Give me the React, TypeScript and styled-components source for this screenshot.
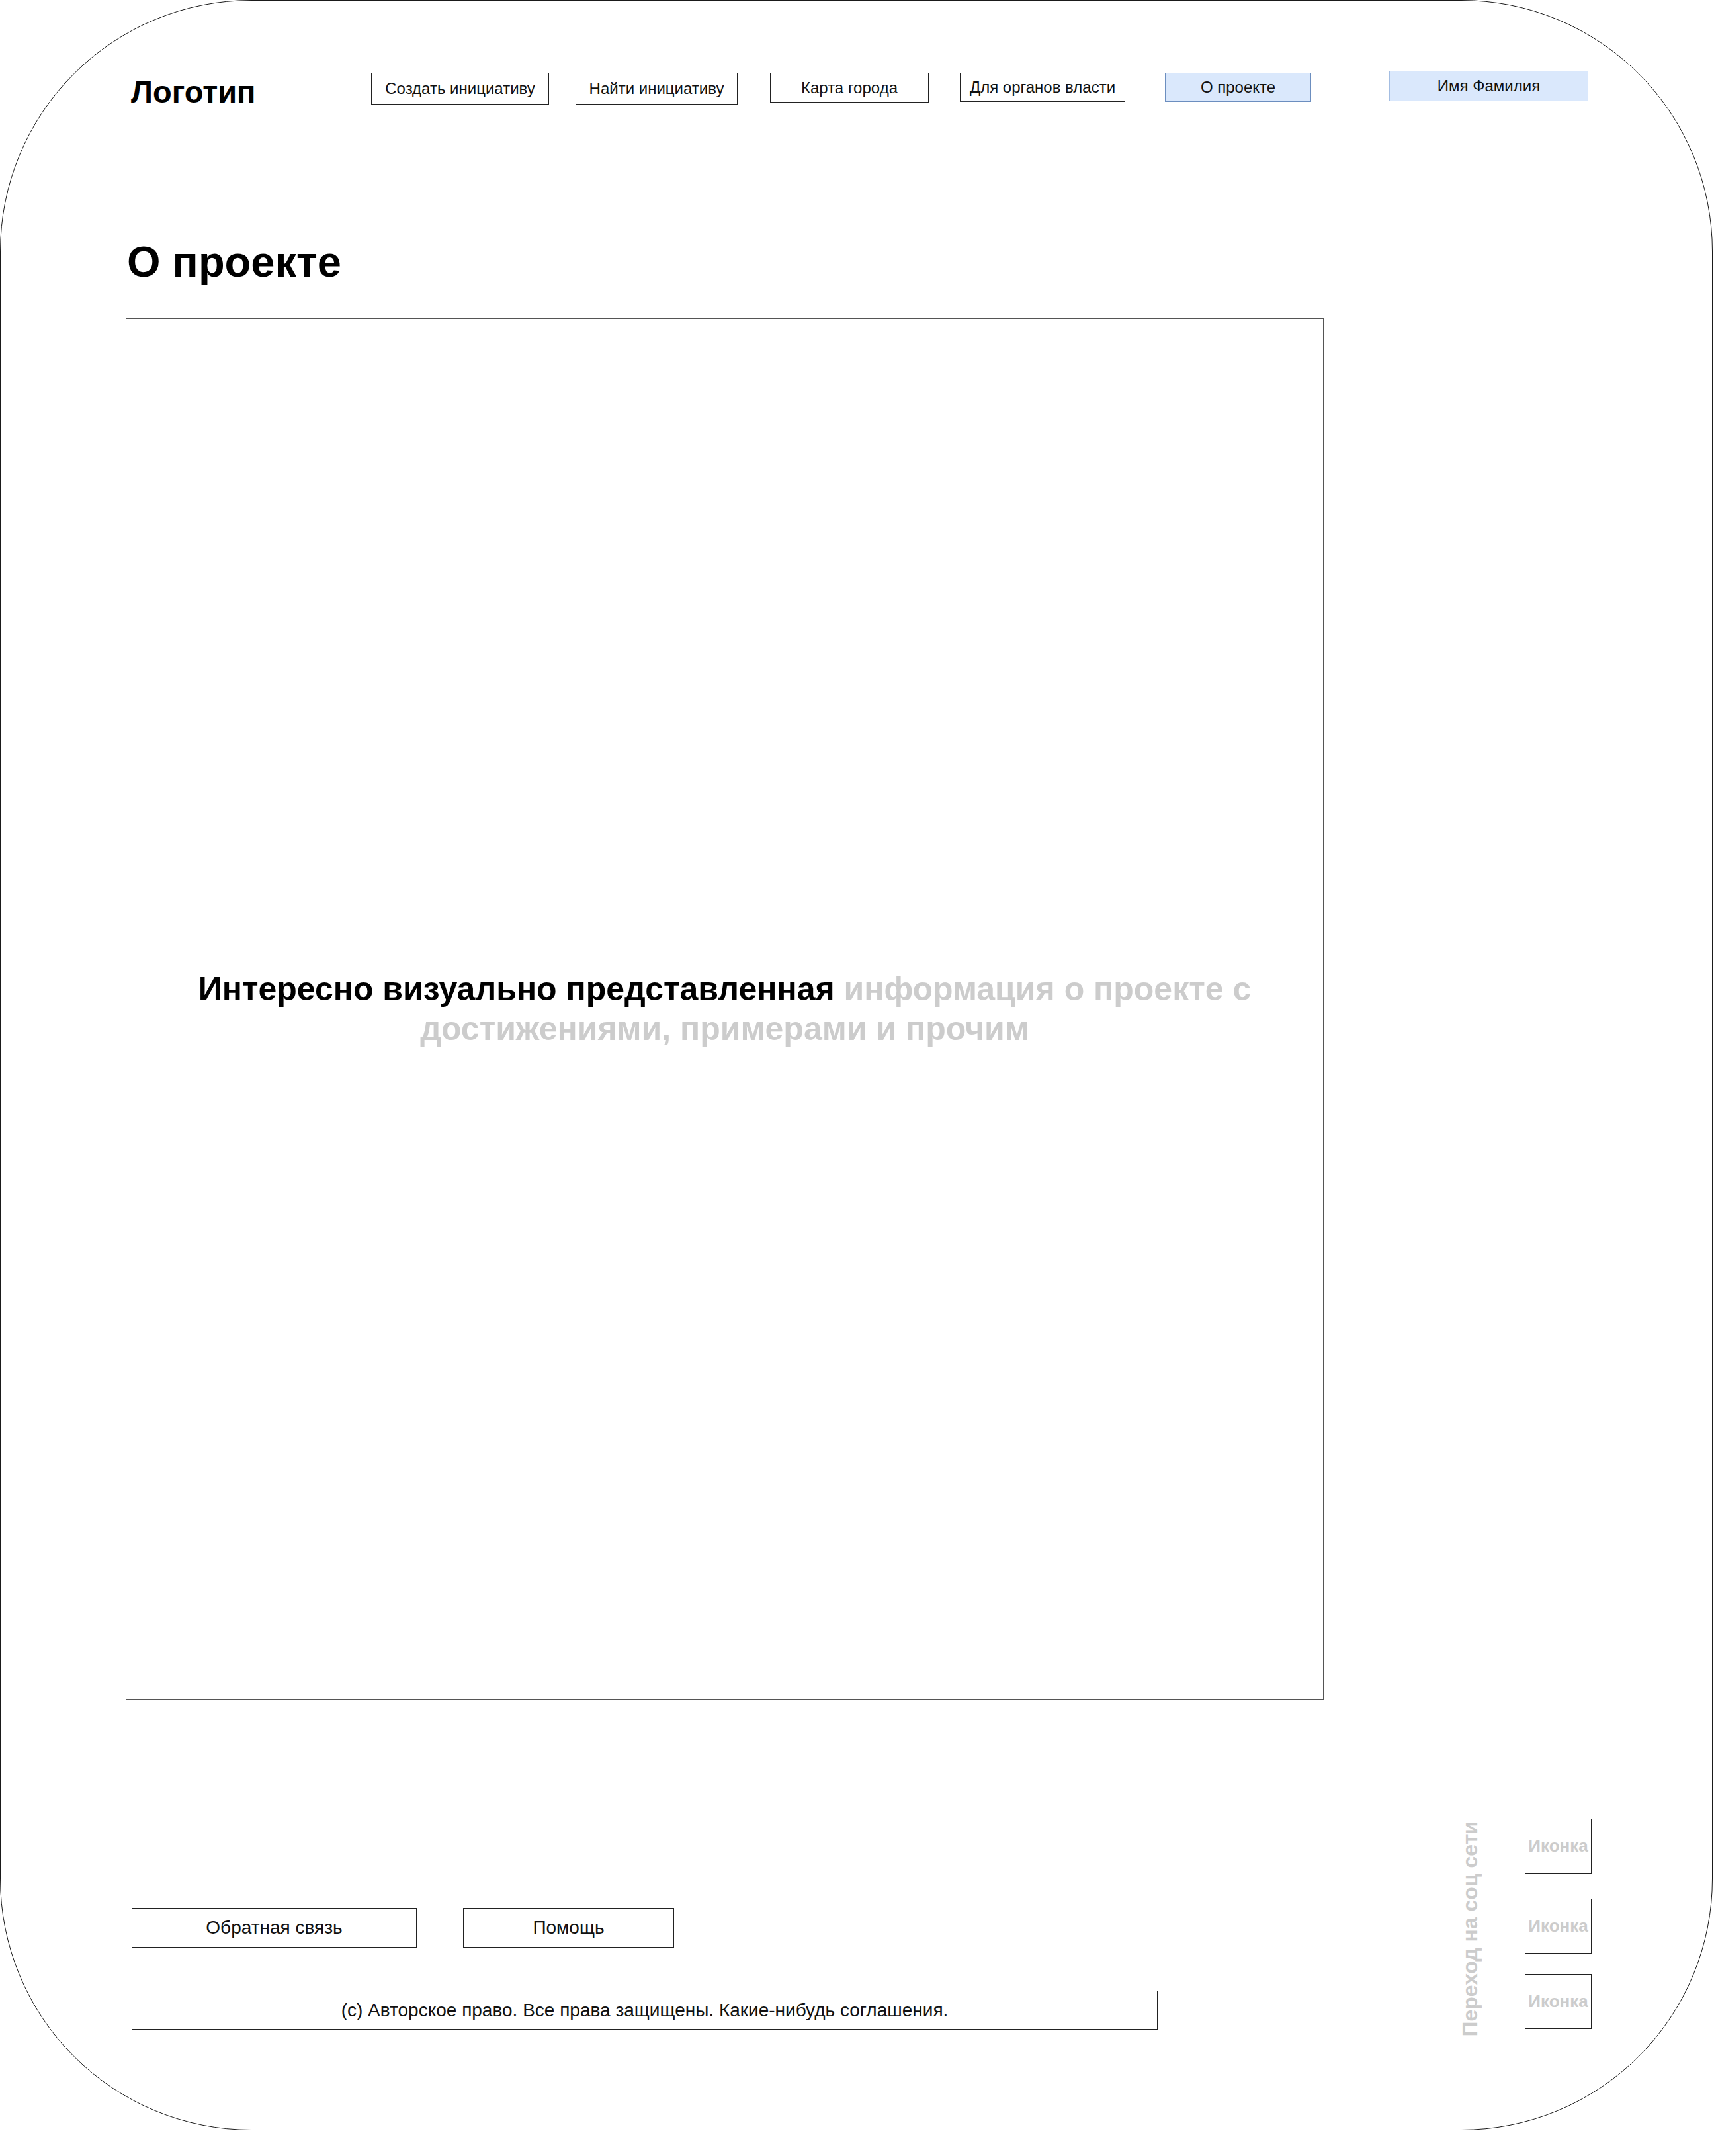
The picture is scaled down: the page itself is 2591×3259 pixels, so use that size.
import React from "react";
import styled, { createGlobalStyle } from "styled-components";

const GlobalStyle = createGlobalStyle`
  html, body {
    margin: 0;
    padding: 0;
    background: #ffffff;
  }
  body {
    font-family: "Liberation Sans", Arial, Helvetica, sans-serif;
    color: #000;
  }
`;

const Frame = styled.div`
  box-sizing: border-box;
  width: 2589px;
  height: 3220px;
  border: 1px solid #1a1a1a;
  border-radius: 380px;
  display: flex;
  flex-direction: column;
`;

const Header = styled.header`
  box-sizing: border-box;
  height: 161px;
  display: flex;
  align-items: flex-start;
  padding: 109px 0 0 197px;
`;

const Logo = styled.div`
  width: 363px;
  margin-top: 5px;
  font-size: 47px;
  line-height: 1;
  font-weight: 700;
`;

const NavButton = styled.div<{ $w: number; $h: number; $ml: number; $mt?: number; $active?: boolean; $soft?: boolean }>`
  box-sizing: border-box;
  flex: none;
  width: ${(p) => p.$w}px;
  height: ${(p) => p.$h}px;
  margin-left: ${(p) => p.$ml}px;
  margin-top: ${(p) => p.$mt ?? 0}px;
  display: flex;
  align-items: center;
  justify-content: center;
  font-size: 24px;
  color: #111;
  white-space: nowrap;
  background: ${(p) => (p.$active ? "#dae8fc" : "#ffffff")};
  border: 1px solid ${(p) => (p.$soft ? "#a3bde2" : p.$active ? "#6c8ebf" : "#222")};
`;

const Title = styled.h1`
  margin: 201px 0 0 191px;
  font-size: 65px;
  line-height: 1;
  font-weight: 700;
`;

const ContentBox = styled.section`
  box-sizing: border-box;
  margin: 53px 0 0 189px;
  width: 1811px;
  height: 2088px;
  border: 1px solid #555;
  display: flex;
  align-items: center;
  justify-content: center;
`;

const Lead = styled.p`
  margin: 0;
  text-align: center;
  font-size: 50px;
  line-height: 60px;
  font-weight: 700;
  color: #000;
`;

const Muted = styled.span`
  color: #cccccc;
`;

const Footer = styled.footer`
  margin-top: 180px;
  display: flex;
  justify-content: space-between;
  align-items: flex-start;
  padding: 0 182px 0 198px;
`;

const LeftCol = styled.div`
  margin-top: 135px;
  width: 1551px;
  display: flex;
  flex-direction: column;
`;

const ButtonRow = styled.div`
  display: flex;
  gap: 70px;
`;

const FooterButton = styled.div<{ $w: number }>`
  box-sizing: border-box;
  width: ${(p) => p.$w}px;
  height: 60px;
  border: 1px solid #222;
  display: flex;
  align-items: center;
  justify-content: center;
  font-size: 28px;
  color: #111;
`;

const Copyright = styled.div`
  box-sizing: border-box;
  margin-top: 65px;
  width: 100%;
  height: 59px;
  border: 1px solid #222;
  display: flex;
  align-items: center;
  justify-content: center;
  font-size: 28px;
  color: #111;
`;

const Social = styled.div`
  display: flex;
  align-items: flex-start;
`;

const SocialLabel = styled.div`
  writing-mode: vertical-rl;
  transform: rotate(180deg);
  font-size: 32px;
  line-height: 1;
  font-weight: 700;
  color: #cccccc;
  margin: 4px 67px 0 0;
  white-space: nowrap;
`;

const IconStack = styled.div`
  display: flex;
  flex-direction: column;
`;

const IconBox = styled.div<{ $mt?: number }>`
  box-sizing: border-box;
  width: 101px;
  height: 83px;
  margin-top: ${(p) => p.$mt ?? 0}px;
  border: 1px solid #222;
  display: flex;
  align-items: center;
  justify-content: center;
  font-size: 26px;
  font-weight: 700;
  color: #cccccc;
`;

const nav = [
  { t: "Создать инициативу", w: 269, h: 48, ml: 0 },
  { t: "Найти инициативу", w: 245, h: 48, ml: 40 },
  { t: "Карта города", w: 240, h: 45, ml: 49 },
  { t: "Для органов власти", w: 250, h: 44, ml: 47 },
];

export default function App() {
  return (
    <>
      <GlobalStyle />
      <Frame>
        <Header>
          <Logo>Логотип</Logo>
          {nav.map((n) => (
            <NavButton key={n.t} $w={n.w} $h={n.h} $ml={n.ml}>
              {n.t}
            </NavButton>
          ))}
          <NavButton $w={221} $h={44} $ml={60} $active>
            О проекте
          </NavButton>
          <NavButton $w={301} $h={46} $ml={118} $mt={-3} $active $soft>
            Имя Фамилия
          </NavButton>
        </Header>

        <Title>О проекте</Title>

        <ContentBox>
          <Lead>
            Интересно визуально представленная <Muted>информация о проекте с</Muted>
            <br />
            <Muted>достижениями, примерами и прочим</Muted>
          </Lead>
        </ContentBox>

        <Footer>
          <LeftCol>
            <ButtonRow>
              <FooterButton $w={431}>Обратная связь</FooterButton>
              <FooterButton $w={319}>Помощь</FooterButton>
            </ButtonRow>
            <Copyright>(с) Авторское право. Все права защищены. Какие-нибудь соглашения.</Copyright>
          </LeftCol>
          <Social>
            <SocialLabel>Переход на соц сети</SocialLabel>
            <IconStack>
              <IconBox>Иконка</IconBox>
              <IconBox $mt={38}>Иконка</IconBox>
              <IconBox $mt={31}>Иконка</IconBox>
            </IconStack>
          </Social>
        </Footer>
      </Frame>
    </>
  );
}
